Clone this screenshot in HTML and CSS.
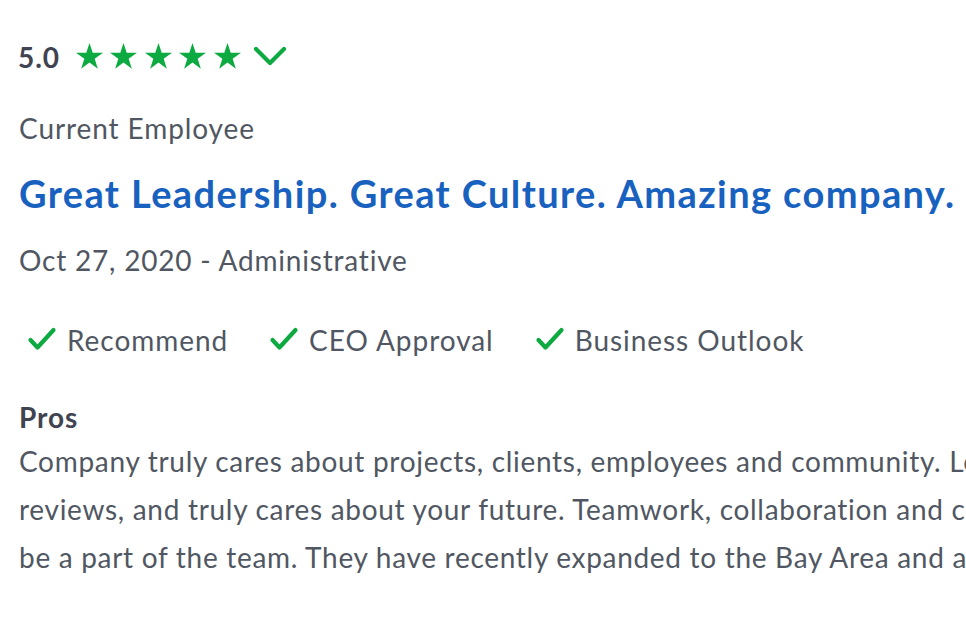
FILE: index.html
```html
<!DOCTYPE html>
<html>
<head>
<meta charset="utf-8">
<link rel="stylesheet" href="styles.css">
</head>
<body>
<div class="review">
  <div class="rating">
    <span class="score">5.0</span>
    <span class="stars">
      <svg class="star" viewBox="0 0 27 26"><path d="M13.5 0L16.69 9.81L27 9.81L18.66 15.87L21.85 25.69L13.5 19.62L5.15 25.69L8.34 15.87L0 9.81L10.31 9.81Z"/></svg>
      <svg class="star" viewBox="0 0 27 26"><path d="M13.5 0L16.69 9.81L27 9.81L18.66 15.87L21.85 25.69L13.5 19.62L5.15 25.69L8.34 15.87L0 9.81L10.31 9.81Z"/></svg>
      <svg class="star" viewBox="0 0 27 26"><path d="M13.5 0L16.69 9.81L27 9.81L18.66 15.87L21.85 25.69L13.5 19.62L5.15 25.69L8.34 15.87L0 9.81L10.31 9.81Z"/></svg>
      <svg class="star" viewBox="0 0 27 26"><path d="M13.5 0L16.69 9.81L27 9.81L18.66 15.87L21.85 25.69L13.5 19.62L5.15 25.69L8.34 15.87L0 9.81L10.31 9.81Z"/></svg>
      <svg class="star" viewBox="0 0 27 26"><path d="M13.5 0L16.69 9.81L27 9.81L18.66 15.87L21.85 25.69L13.5 19.62L5.15 25.69L8.34 15.87L0 9.81L10.31 9.81Z"/></svg>
    </span>
    <svg class="chevron" viewBox="0 0 34 22"><path d="M3 4L17 18L31 4"/></svg>
  </div>
  <div class="status">Current Employee</div>
  <h2 class="title">Great Leadership. Great Culture. Amazing company.</h2>
  <div class="meta">Oct 27, 2020 - Administrative</div>
  <div class="checks">
    <span class="check"><svg viewBox="0 0 30 26"><path d="M3.5 14L10.5 21.5L26.5 4"/></svg>Recommend</span>
    <span class="check"><svg viewBox="0 0 30 26"><path d="M3.5 14L10.5 21.5L26.5 4"/></svg>CEO Approval</span>
    <span class="check"><svg viewBox="0 0 30 26"><path d="M3.5 14L10.5 21.5L26.5 4"/></svg>Business Outlook</span>
  </div>
  <div class="section">
    <div class="label">Pros</div>
    <p class="body">
      <span class="line">Company truly cares about projects, clients, employees and community. Leadership listens, gives honest</span>
      <span class="line">reviews, and truly cares about your future. Teamwork, collaboration and camaraderie make it great to</span>
      <span class="line">be a part of the team. They have recently expanded to the Bay Area and are growing fast.</span>
    </p>
  </div>
</div>
</body>
</html>
```
FILE: styles.css
```css
html, body {
  margin: 0;
  padding: 0;
  background: #ffffff;
  overflow: hidden;
}
body {
  width: 966px;
  height: 644px;
  font-family: Lato, "Open Sans", sans-serif;
  color: #505762;
}
.review {
  padding: 37px 0 0 18px;
  width: 1500px;
  font-size: 28px;
  letter-spacing: 0.9px;
}
.rating {
  display: flex;
  align-items: center;
  height: 40px;
}
.score {
  font-weight: 700;
  color: #3f4450;
  line-height: 40px;
  margin-right: 16px;
}
.stars {
  display: flex;
  gap: 7.5px;
}
.star {
  width: 27px;
  height: 26px;
  fill: #0caa41;
  margin-top: -3px;
}
.chevron {
  width: 34px;
  height: 22px;
  margin-left: 12px;
  margin-top: -2px;
  fill: none;
  stroke: #0caa41;
  stroke-width: 4.2;
  stroke-linecap: round;
  stroke-linejoin: round;
}
.status {
  margin-top: 31px;
  line-height: 40px;
  padding-left: 1px;
}
.title {
  margin: 21px 0 0;
  font-size: 38px;
  line-height: 48px;
  letter-spacing: 1.4px;
  font-weight: 700;
  color: #1861bf;
  padding-left: 1px;
}
.meta {
  margin-top: 23px;
  line-height: 40px;
  padding-left: 1px;
  letter-spacing: 0.8px;
}
.checks {
  display: flex;
  gap: 41px;
  margin-top: 40px;
  padding-left: 9px;
  line-height: 40px;
  letter-spacing: 0.95px;
}
.check {
  display: flex;
  align-items: center;
}
.check svg {
  width: 30px;
  height: 26px;
  margin-right: 10px;
  margin-top: -3px;
  fill: none;
  stroke: #0caa41;
  stroke-width: 4.2;
  stroke-linecap: round;
  stroke-linejoin: round;
}
.section {
  margin-top: 38px;
  padding-left: 1px;
}
.label {
  font-weight: 700;
  line-height: 39px;
  color: #3f4450;
}
.body {
  margin: 0;
  line-height: 48px;
  letter-spacing: 0.7px;
}
.line {
  display: block;
  white-space: nowrap;
}
```
